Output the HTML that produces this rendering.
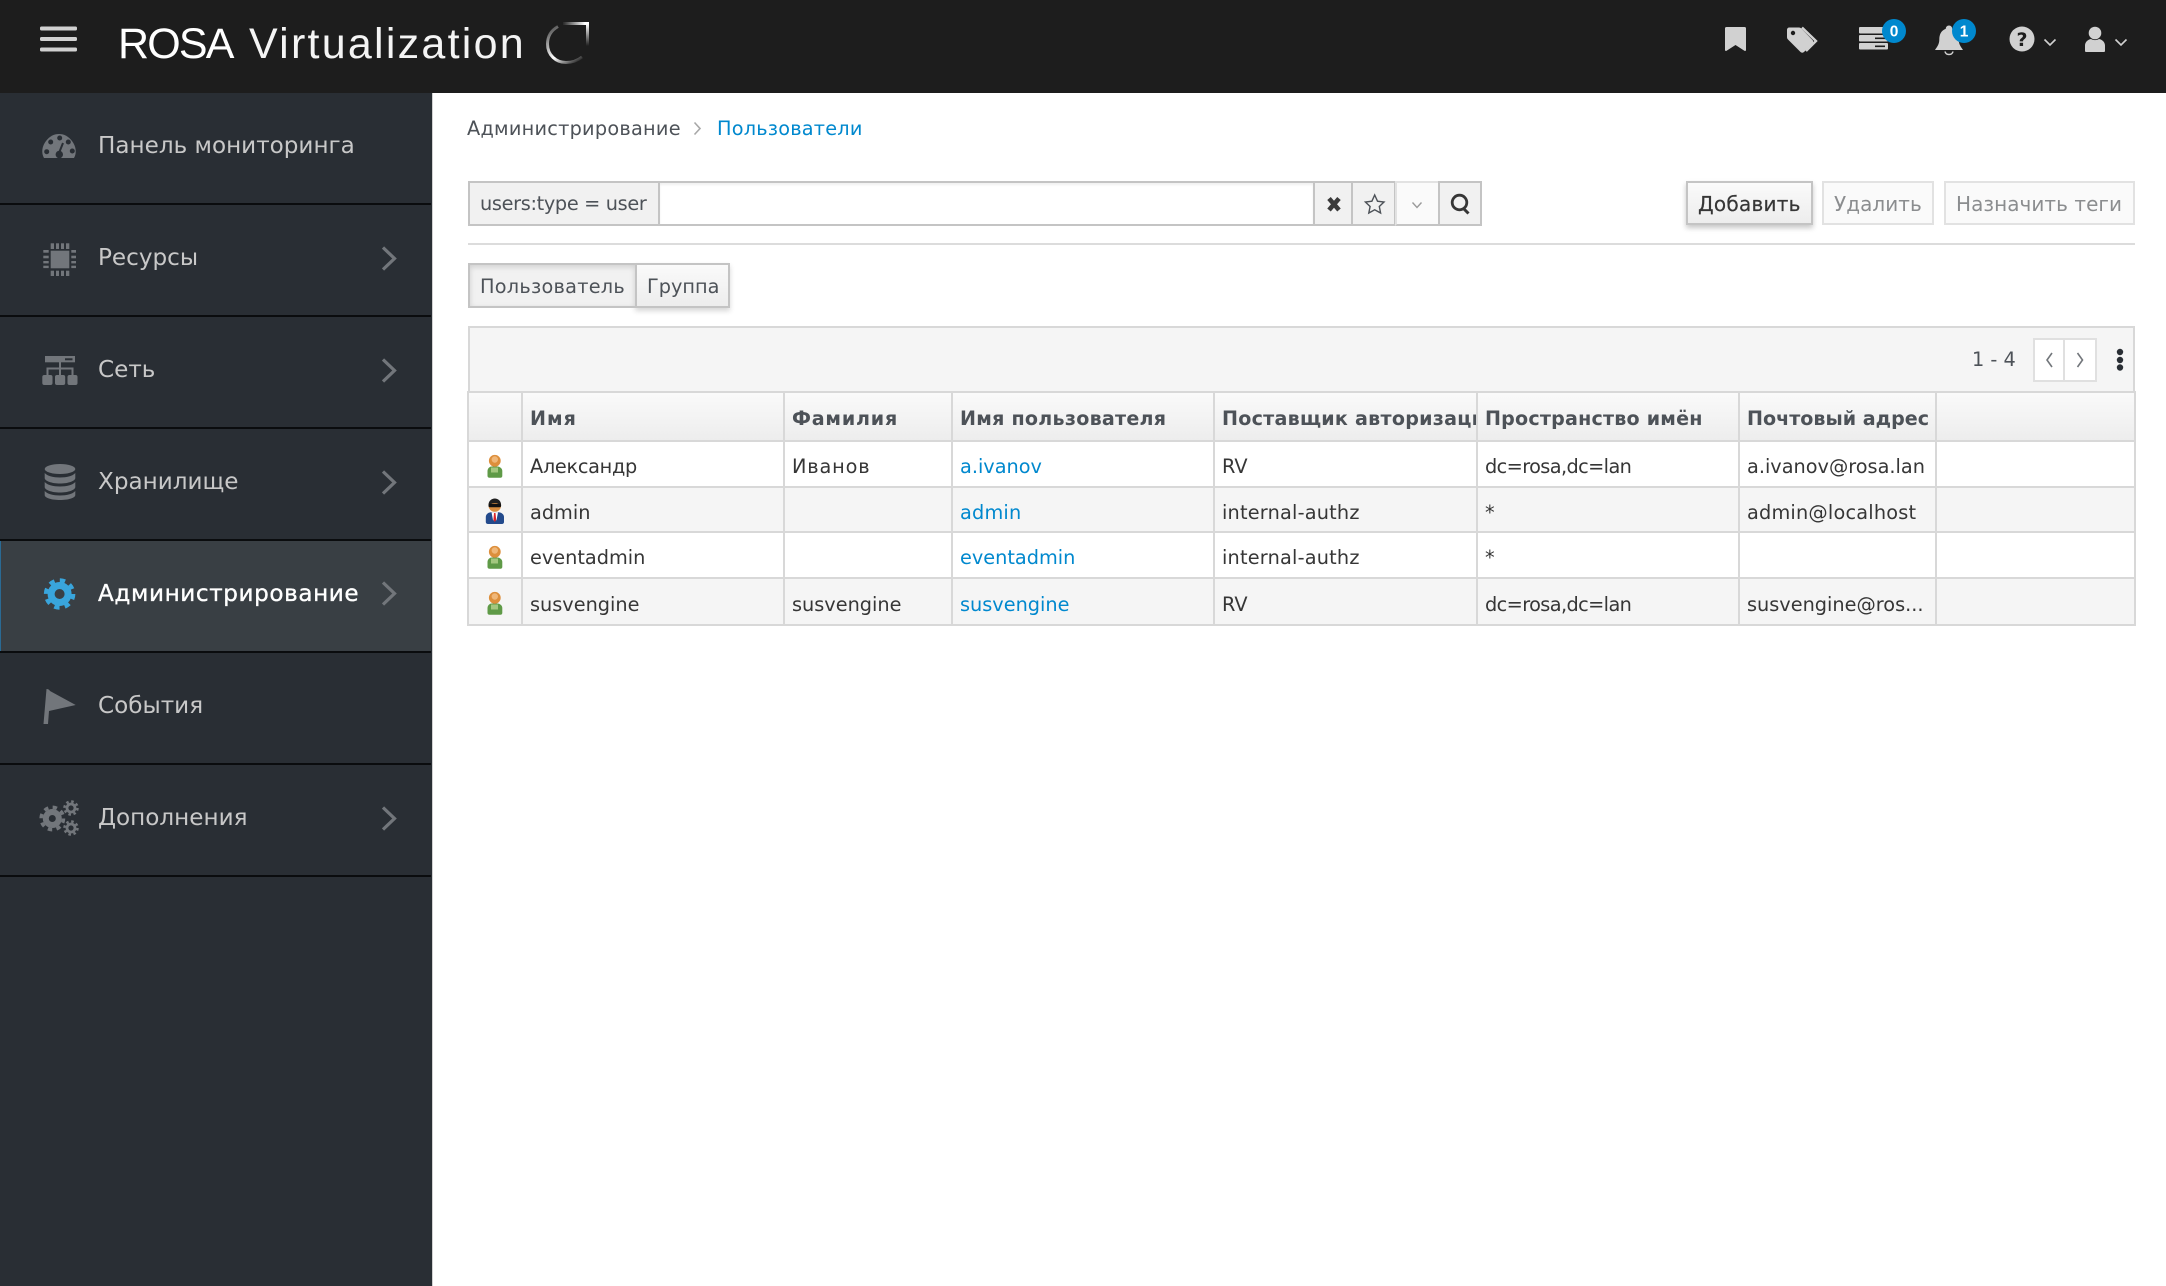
<!DOCTYPE html>
<html lang="ru"><head><meta charset="utf-8"><title>ROSA Virtualization</title>
<style>
*{box-sizing:border-box}
html,body{margin:0;padding:0;width:2166px;height:1286px;overflow:hidden;background:#fff;font-family:"DejaVu Sans","Liberation Sans",sans-serif;font-size:19px;color:#363636}
.a{position:absolute;white-space:nowrap}
#top{left:0;top:0;width:2166px;height:93px;background:#1d1d1d}
#side{left:0;top:93px;width:433px;height:1193px;background:#292e34;border-right:1px solid #d1d1d1}
.sep{position:absolute;left:0;width:431px;height:2px;background:#0a0c0e}
.nav{font-size:23.1px;line-height:30px;color:#c8c8c8;left:98px}
.t{font-size:19.3px;line-height:28px}
.b{font-size:20px;letter-spacing:.25px}
.box{border:2px solid #c4c4c4;background:#f1f1f1}
.btn{border:2px solid #c4c4c4;background:linear-gradient(#fafafa,#ededed)}
.dis{border:2px solid #e2e2e2;background:#fafafa}
a{color:#0088ce;text-decoration:none}
table{position:absolute;left:467px;top:391px;width:1669px;table-layout:fixed;border-collapse:collapse}
th,td{border:2px solid #d8d8d8;padding:5px 0 0 7px;text-align:left;white-space:nowrap;overflow:hidden;font-size:19.3px;font-weight:400;color:#363636}
th{font-weight:700;font-size:19.1px;padding-top:3px;letter-spacing:.25px;color:#4d5258;background:linear-gradient(#fafafa,#ededed)}
tr.o td{background:#f5f5f5}
</style></head><body>
<header class="a" id="top">
<span class="a" style="left:118px;top:19px;font:43px/50px 'Liberation Sans',sans-serif;color:#fff;letter-spacing:-1.8px">ROSA</span>
<span class="a" style="left:249px;top:19px;font:43px/50px 'Liberation Sans',sans-serif;color:#f4f4f4;letter-spacing:2.25px">Virtualization</span>
</header>
<nav class="a" id="side">
<div class="a" style="left:0;top:448px;width:431px;height:111px;background:#393f44;border-left:1px solid #2a6a94"></div>
<div class="sep" style="top:110px"></div><div class="sep" style="top:222px"></div><div class="sep" style="top:334px"></div><div class="sep" style="top:446px"></div><div class="sep" style="top:558px"></div><div class="sep" style="top:670px"></div><div class="sep" style="top:782px"></div>
</nav>
<span class="a nav" style="top:131px">Панель мониторинга</span>
<span class="a nav" style="top:243px">Ресурсы</span>
<span class="a nav" style="top:355px">Сеть</span>
<span class="a nav" style="top:467px">Хранилище</span>
<span class="a nav" style="top:579px;color:#fff;letter-spacing:.6px;-webkit-text-stroke:.35px #fff">Администрирование</span>
<span class="a nav" style="top:691px">События</span>
<span class="a nav" style="top:803px">Дополнения</span>

<span class="a t" style="left:467px;top:115px;color:#4d5258;letter-spacing:.25px">Администрирование</span>
<a class="a t" style="left:717px;top:115px;letter-spacing:.2px">Пользователи</a>

<div class="a box" style="left:468px;top:181px;width:192px;height:45px"></div>
<span class="a t" style="left:480px;top:190px;color:#4d5258;letter-spacing:-.33px">users:type = user</span>
<div class="a" style="left:658px;top:181px;width:657px;height:45px;background:#fff;border:2px solid #c4c4c4;box-shadow:inset 0 2px 2px #f0f0f0"></div>
<div class="a box" style="left:1313px;top:181px;width:40px;height:45px"></div>
<div class="a box" style="left:1351px;top:181px;width:45px;height:45px"></div>
<div class="a" style="left:1395px;top:181px;width:45px;height:45px;background:#fafafa;border:2px solid #e2e2e2;border-bottom-color:#c4c4c4"></div>
<div class="a box" style="left:1438px;top:181px;width:44px;height:45px"></div>

<div class="a btn" style="left:1686px;top:181px;width:127px;height:44px;box-shadow:0 3px 5px rgba(0,0,0,.22)"></div>
<span class="a t b" style="left:1698px;top:190px;color:#363636;-webkit-text-stroke:.2px #363636">Добавить</span>
<div class="a dis" style="left:1822px;top:181px;width:112px;height:44px"></div>
<span class="a t b" style="left:1834px;top:190px;color:#8b8d8f;letter-spacing:.05px">Удалить</span>
<div class="a dis" style="left:1944px;top:181px;width:191px;height:44px"></div>
<span class="a t b" style="left:1956px;top:190px;color:#8b8d8f;letter-spacing:.05px">Назначить теги</span>
<div class="a" style="left:468px;top:243px;width:1667px;height:2px;background:#dcdcdc"></div>

<div class="a btn" style="left:635px;top:263px;width:95px;height:45px;box-shadow:0 3px 5px rgba(0,0,0,.16)"></div>
<div class="a" style="left:468px;top:263px;width:169px;height:45px;background:#f1f1f1;border:2px solid #c4c4c4;box-shadow:inset 0 2px 6px rgba(0,0,0,.14)"></div>
<span class="a t" style="left:480px;top:273px;color:#4d5258;letter-spacing:.25px">Пользователь</span>
<span class="a t" style="left:647px;top:273px;color:#4d5258">Группа</span>

<div class="a" style="left:468px;top:326px;width:1667px;height:67px;background:#f5f5f5;border:2px solid #d8d8d8"></div>
<span class="a t" style="left:1972px;top:346px;color:#4d5258">1 - 4</span>
<div class="a" style="left:2033px;top:338px;width:32px;height:44px;background:#fff;border:2px solid #e0e0e0"></div>
<div class="a" style="left:2063px;top:338px;width:34px;height:44px;background:#fff;border:2px solid #e0e0e0"></div>

<table>
<colgroup><col style="width:54px"><col style="width:262px"><col style="width:168px"><col style="width:262px"><col style="width:263px"><col style="width:262px"><col style="width:197px"><col style="width:199px"></colgroup>
<tr style="height:49px"><th></th><th style="letter-spacing:1px">Имя</th><th style="letter-spacing:.8px">Фамилия</th><th>Имя пользователя</th><th>Поставщик авторизации</th><th style="letter-spacing:.2px">Пространство имён</th><th style="letter-spacing:0">Почтовый адрес</th><th></th></tr>
<tr style="height:46px"><td></td><td style="letter-spacing:-.3px">Александр</td><td style="letter-spacing:.85px">Иванов</td><td><a>a.ivanov</a></td><td>RV</td><td style="letter-spacing:-.6px">dc=rosa,dc=lan</td><td>a.ivanov@rosa.lan</td><td></td></tr>
<tr class="o" style="height:45px"><td></td><td>admin</td><td></td><td><a style="letter-spacing:.2px">admin</a></td><td style="letter-spacing:.2px">internal-authz</td><td>*</td><td style="letter-spacing:.2px">admin@localhost</td><td></td></tr>
<tr style="height:46px"><td></td><td>eventadmin</td><td></td><td><a>eventadmin</a></td><td style="letter-spacing:.2px">internal-authz</td><td>*</td><td></td><td></td></tr>
<tr class="o" style="height:47px"><td></td><td>susvengine</td><td>susvengine</td><td><a>susvengine</a></td><td>RV</td><td style="letter-spacing:-.6px">dc=rosa,dc=lan</td><td>susvengine@ros...</td><td></td></tr>
</table>

<svg class="a" style="left:0;top:0;pointer-events:none" width="2166" height="1286" viewBox="0 0 2166 1286" xmlns="http://www.w3.org/2000/svg">
<defs>
<linearGradient id="l1" gradientUnits="userSpaceOnUse" x1="563" y1="22" x2="585" y2="22"><stop offset="0" stop-color="#fff" stop-opacity=".05"/><stop offset="1" stop-color="#fff"/></linearGradient>
<linearGradient id="l2" gradientUnits="userSpaceOnUse" x1="589" y1="24" x2="589" y2="46"><stop offset="0" stop-color="#fff"/><stop offset="1" stop-color="#fff" stop-opacity="0"/></linearGradient>
<linearGradient id="l3" gradientUnits="userSpaceOnUse" x1="555" y1="25" x2="580" y2="62"><stop offset="0" stop-color="#fff" stop-opacity=".25"/><stop offset=".6" stop-color="#fff"/><stop offset="1" stop-color="#fff" stop-opacity="0"/></linearGradient>
</defs>
<!-- header -->
<g fill="#d1d1d1"><rect x="40" y="26.5" width="37" height="4" rx="1.5"/><rect x="40" y="37" width="37" height="4" rx="1.5"/><rect x="40" y="47.5" width="37" height="4" rx="1.5"/></g>
<g fill="none" stroke-width="3">
<path d="M563 23.5H587.5" stroke="url(#l1)"/><path d="M587.5 22V46" stroke="url(#l2)"/>
<path d="M558 26.5C550 31 547.5 37 547.5 44C547.5 55 556 62.5 566 62.5C572 62.5 577 61 582 57" stroke="url(#l3)"/>
</g>
<path d="M1726.5 27h18a1.5 1.5 0 0 1 1.5 1.5V50a1 1 0 0 1-1.6.8L1735.5 45l-8.900 5.800a1 1 0 0 1-1.600-.8V28.500a1.500 1.500 0 0 1 1.500-1.500z" fill="#d1d1d1"/>
<path d="M1789 27.500h10a3 3 0 0 1 2.300 1L1812.500 40a2.500 2.500 0 0 1 0 3.500l-8.500 8.500a2.500 2.500 0 0 1-3.500 0L1788 39.500a3 3 0 0 1-1-2.300v-7.200a2.500 2.500 0 0 1 2-2.500z" fill="#d1d1d1"/>
<circle cx="1793" cy="33" r="2.200" fill="#1d1d1d"/>
<path d="M1802 27.500L1816 41L1806 51" fill="none" stroke="#d1d1d1" stroke-width="2.400"/>
<g fill="#d1d1d1"><rect x="1859" y="27" width="29" height="6.500" rx="1"/><rect x="1859" y="35" width="29" height="6.500" rx="1"/><rect x="1859" y="43" width="29" height="6.500" rx="1"/></g>
<g fill="#1d1d1d"><rect x="1875" y="37.500" width="10" height="1.600"/><rect x="1875" y="45.500" width="10" height="1.600"/></g>
<circle cx="1894" cy="31" r="12" fill="#0088ce"/>
<text x="1894" y="36.500" text-anchor="middle" font-family="Liberation Sans,sans-serif" font-weight="700" font-size="15.500" fill="#fff">0</text>
<path d="M1949 25.500c-2 0-3.200 1.500-3.200 3.200-5 2-6.500 6-6.500 11 0 5-3 8-4.300 10.300h28c-1.300-2.300-4.300-5.300-4.300-10.300 0-5-1.500-9-6.500-11 0-1.700-1.200-3.200-3.200-3.200z" fill="#d1d1d1"/>
<path d="M1945 51.500c.5 2 2 3 4 3s3.500-1 4-3" fill="none" stroke="#d1d1d1" stroke-width="1.500"/>
<circle cx="1964" cy="31" r="12" fill="#0088ce"/>
<text x="1964" y="36.500" text-anchor="middle" font-family="Liberation Sans,sans-serif" font-weight="700" font-size="15.500" fill="#fff">1</text>
<circle cx="2022" cy="39" r="12.500" fill="#d1d1d1"/>
<text x="2022" y="46" text-anchor="middle" font-family="DejaVu Sans,sans-serif" font-weight="700" font-size="19" fill="#1d1d1d">?</text>
<circle cx="2095" cy="33" r="6.300" fill="#d1d1d1"/>
<path d="M2085 51v-5.500c0-3.500 3-6 6-6.500 2.500 1.500 5.500 1.500 8 0 3 .5 6 3 6 6.500V51c0 .500-.500 1-1 1h-18c-.5 0-1-.5-1-1z" fill="#d1d1d1"/>
<g fill="none" stroke="#d1d1d1" stroke-width="1.600"><path d="M2044.500 39.500l5.500 5.500 5.500-5.500"/><path d="M2115.500 39.500l5.500 5.500 5.500-5.500"/></g>
<!-- sidebar icons -->
<g fill="#72767b">
<path d="M44 158C41 153 42 146 46 141C50 136 54 134 59 134C64 134 68 136 72 141C76 146 77 153 74 158Z"/>
<rect x="50.700" y="250.700" width="18.600" height="17.600"/>
<rect x="50.700" y="243.300" width="3.300" height="5.700"/><rect x="56" y="243.300" width="3" height="5.700"/><rect x="61" y="243.300" width="3" height="5.700"/><rect x="66" y="243.300" width="3.300" height="5.700"/>
<rect x="50.700" y="270.700" width="3.300" height="5.300"/><rect x="56" y="270.700" width="3" height="5.300"/><rect x="61" y="270.700" width="3" height="5.300"/><rect x="66" y="270.700" width="3.300" height="5.300"/>
<rect x="43.300" y="250" width="5.400" height="2.700"/><rect x="43.300" y="255.700" width="5.400" height="2.600"/><rect x="43.300" y="261" width="5.400" height="2.400"/><rect x="43.300" y="265.700" width="5.400" height="2.400"/>
<rect x="71.300" y="250" width="4.700" height="2.700"/><rect x="71.300" y="255.700" width="4.700" height="2.600"/><rect x="71.300" y="261" width="4.700" height="2.400"/><rect x="71.300" y="265.700" width="4.700" height="2.400"/>
<rect x="45" y="356" width="30" height="6.300"/>
<rect x="42.300" y="375" width="10.200" height="10" rx="2"/><rect x="55" y="375" width="10.200" height="10" rx="2"/><rect x="67.500" y="375" width="10" height="10" rx="2"/>
<ellipse cx="60" cy="469" rx="15.300" ry="5"/>
<path d="M44.700 473v5c0 3 7 5.500 15.300 5.500s15.300-2.500 15.300-5.500v-5c-2.500 3-8.500 4.500-15.300 4.500s-12.800-1.500-15.300-4.500z"/>
<path d="M44.700 482v5c0 3 7 5.500 15.300 5.500s15.300-2.500 15.300-5.500v-5c-2.500 3-8.500 4.500-15.300 4.500s-12.800-1.500-15.300-4.500z"/>
<path d="M44.700 491v4c0 3 7 5 15.300 5s15.300-2 15.300-5v-4c-2.500 3-8.500 4.500-15.300 4.500s-12.800-1.500-15.300-4.500z"/>
<path d="M43.500 724L46.500 689Q49 689 50 691L75.700 705L49 711L48 724Z"/>
</g>
<g fill="#292e34"><circle cx="46.700" cy="151.700" r="2.500"/><circle cx="50.700" cy="142" r="2.500"/><circle cx="59.700" cy="138" r="2.500"/><circle cx="68.300" cy="142" r="2.500"/><circle cx="72.300" cy="151" r="2.500"/><circle cx="59.300" cy="154.500" r="3.700"/></g>
<path d="M59 153L63 143" stroke="#292e34" stroke-width="2"/>
<rect x="65" y="358.300" width="7.500" height="2" fill="#292e34"/>
<g fill="none" stroke="#72767b">
<path d="M60 362V375M47.500 375V368.500H72.500V375" stroke-width="2"/>
<path d="M383 247.500L394.500 258.500L383 269.500M383 359.500L394.500 370.500L383 381.500M383 471.500L394.500 482.500L383 493.500M383 582.500L394.500 593.500L383 604.500M383 807.500L394.500 818.500L383 829.500" stroke-width="3.200"/>
<circle cx="52.300" cy="818.500" r="6.500" stroke-width="6"/><circle cx="52.300" cy="818.500" r="11.200" stroke-width="3.500" stroke-dasharray="4.400 4.400"/>
<circle cx="71" cy="808" r="4" stroke-width="2.800"/><circle cx="71" cy="808" r="6.500" stroke-width="2.500" stroke-dasharray="2.550 2.550"/>
<circle cx="71" cy="828" r="4" stroke-width="2.800"/><circle cx="71" cy="828" r="6.500" stroke-width="2.500" stroke-dasharray="2.550 2.550"/>
</g>
<g fill="none" stroke="#39a5dc"><circle cx="59.600" cy="594" r="8.500" stroke-width="7"/><circle cx="59.600" cy="594" r="13.500" stroke-width="4.500" stroke-dasharray="5.300 5.300"/></g>
<!-- breadcrumb + search icons -->
<path d="M694.500 122.500L700 128.500L694.500 134.500" fill="none" stroke="#a8a8a8" stroke-width="1.600"/>
<path d="M1329 198.500L1339 210M1339 198.500L1329 210" stroke="#3a3a3a" stroke-width="4.600"/>
<path d="M1374.700 195L1377.500 201.200L1384 202L1379.300 206.500L1380.600 213L1374.700 209.800L1368.800 213L1370.100 206.500L1365.400 202L1371.900 201.200Z" fill="none" stroke="#4d5258" stroke-width="1.400"/>
<path d="M1412.500 202.500L1417 207.500L1421.500 202.500" fill="none" stroke="#9a9a9a" stroke-width="1.400"/>
<circle cx="1459.500" cy="202.500" r="7.300" fill="none" stroke="#363636" stroke-width="2.800"/>
<path d="M1463 208L1468.500 213.500" stroke="#363636" stroke-width="3"/>
<!-- pager -->
<path d="M2052 353L2047 360L2052 367M2077.500 353L2082.500 360L2077.500 367" fill="none" stroke="#72767b" stroke-width="1.600"/>
<g fill="#292e34"><circle cx="2120" cy="352" r="3.200"/><circle cx="2120" cy="360" r="3.200"/><circle cx="2120" cy="367.500" r="3.200"/></g>
<!-- user icons -->
<g>
<path d="M487.500 476v-5c0-2.500 2-4.300 4-4.500h6c2.500.2 4.800 2 4.800 4.500v5c0 1-.8 1.700-1.800 1.700h-11c-1.200 0-2-.7-2-1.700z" fill="#5f9a47"/>
<rect x="491" y="467.500" width="7" height="5" fill="#a3c77f"/>
<circle cx="494.800" cy="460.800" r="5.900" fill="#dd8f3c"/><circle cx="494.800" cy="459.500" r="3.200" fill="#f0b778"/>
</g>
<g transform="translate(0,91)">
<path d="M487.500 476v-5c0-2.500 2-4.300 4-4.500h6c2.500.2 4.800 2 4.800 4.500v5c0 1-.8 1.700-1.800 1.700h-11c-1.200 0-2-.7-2-1.700z" fill="#5f9a47"/>
<rect x="491" y="467.500" width="7" height="5" fill="#a3c77f"/>
<circle cx="494.800" cy="460.800" r="5.900" fill="#dd8f3c"/><circle cx="494.800" cy="459.500" r="3.200" fill="#f0b778"/>
</g>
<g transform="translate(0,137)">
<path d="M487.500 476v-5c0-2.500 2-4.300 4-4.500h6c2.500.2 4.800 2 4.800 4.500v5c0 1-.8 1.700-1.800 1.700h-11c-1.200 0-2-.7-2-1.700z" fill="#5f9a47"/>
<rect x="491" y="467.500" width="7" height="5" fill="#a3c77f"/>
<circle cx="494.800" cy="460.800" r="5.900" fill="#dd8f3c"/><circle cx="494.800" cy="459.500" r="3.200" fill="#f0b778"/>
</g>
<g>
<path d="M485.800 522v-5c0-2.500 2-4.500 5-4.800h8c3 .3 5.200 2.300 5.200 4.800v5c0 1.200-1 2-2 2h-14c-1.200 0-2.200-.8-2.200-2z" fill="#234a8c"/>
<path d="M491.500 512.200h6.500l-1.500 8h-3.500z" fill="#fff"/><path d="M494 513h1.500l.7 7-1.400 2-1.400-2z" fill="#d8262c"/>
<circle cx="494.800" cy="505.500" r="6.300" fill="#d98d3f"/>
<path d="M488.500 505c0-4 3-6.500 6.300-6.500s6.300 2.500 6.300 6.500h-1.500c-1-1.500-3-1.800-4.800-1.800s-3.800.3-4.800 1.800z" fill="#1f1f1f"/>
<rect x="488.500" y="504" width="12.600" height="3.300" rx="1.500" fill="#111"/>
</g>
</svg>
</body></html>
